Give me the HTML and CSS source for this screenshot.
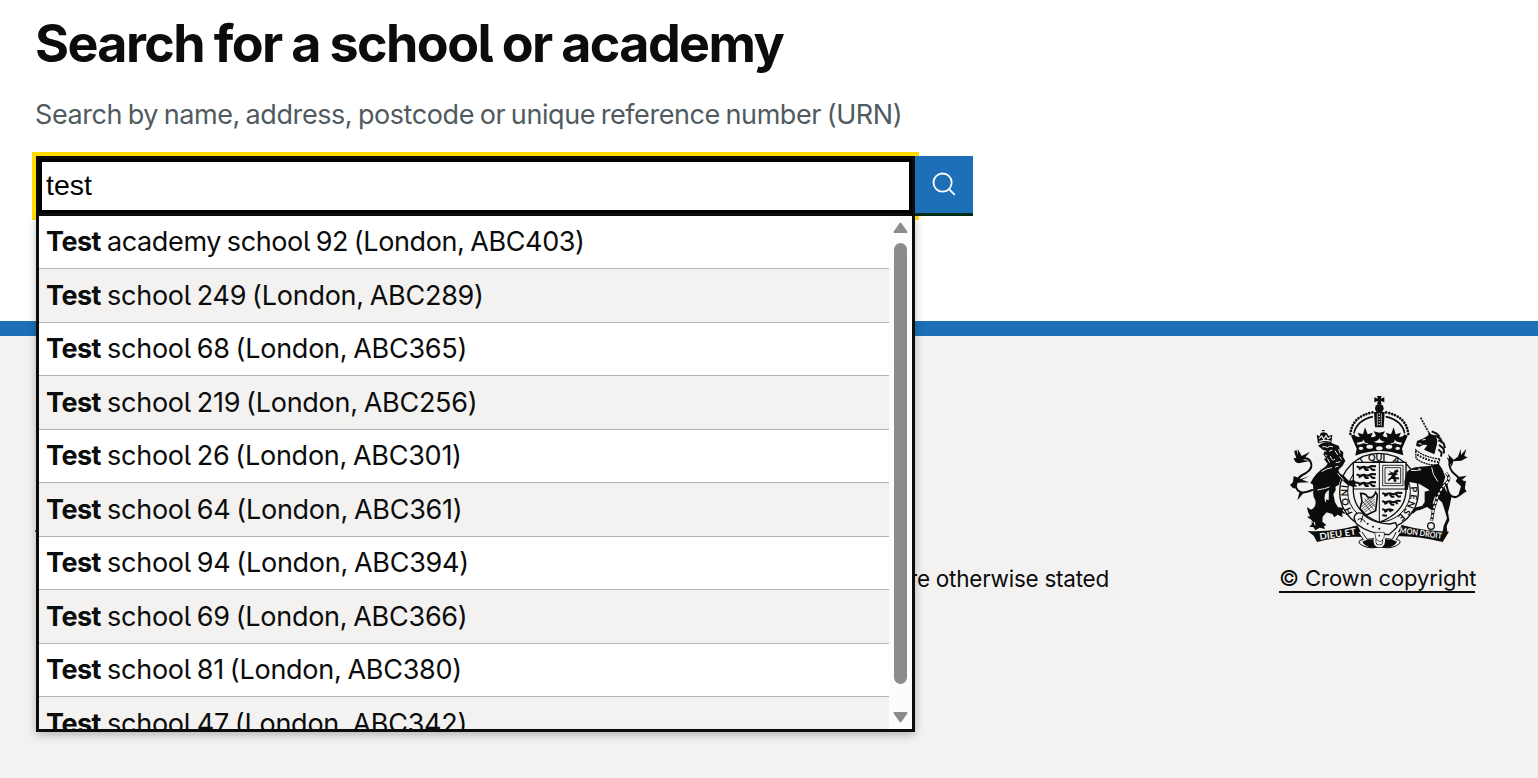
FILE: index.html
```html
<!DOCTYPE html>
<html lang="en">
<head>
<meta charset="utf-8">
<title>Search for a school or academy</title>
<link rel="stylesheet" href="styles.css">
</head>
<body>
<main class="main">
  <h1 class="title">Search for a school or academy</h1>
  <p class="hint">Search by name, address, postcode or unique reference number (URN)</p>
  <form class="search">
    <div class="combo">
      <div class="field">test</div>
      <div class="menu">
        <ul class="options">
          <li class="option option-long"><b>Test</b><span>academy school 92 (London, ABC403)</span></li>
          <li class="option"><b>Test</b><span>school 249 (London, ABC289)</span></li>
          <li class="option"><b>Test</b><span>school 68 (London, ABC365)</span></li>
          <li class="option"><b>Test</b><span>school 219 (London, ABC256)</span></li>
          <li class="option"><b>Test</b><span>school 26 (London, ABC301)</span></li>
          <li class="option"><b>Test</b><span>school 64 (London, ABC361)</span></li>
          <li class="option"><b>Test</b><span>school 94 (London, ABC394)</span></li>
          <li class="option"><b>Test</b><span>school 69 (London, ABC366)</span></li>
          <li class="option"><b>Test</b><span>school 81 (London, ABC380)</span></li>
          <li class="option"><b>Test</b><span>school 47 (London, ABC342)</span></li>
        </ul>
        <div class="scrollbar">
          <svg width="15" height="12" viewBox="0 0 15 12"><path d="M7.5 1.5 13.5 10H1.5Z" fill="#8b8b8b" stroke="#8b8b8b" stroke-width="2" stroke-linejoin="round"/></svg>
          <div class="thumb"></div>
          <svg width="15" height="12" viewBox="0 0 15 12"><path d="M7.5 10.5 13.5 2H1.5Z" fill="#8b8b8b" stroke="#8b8b8b" stroke-width="2" stroke-linejoin="round"/></svg>
        </div>
      </div>
    </div>
    <button class="submit" type="button" aria-label="Search">
      <svg width="26" height="26" viewBox="0 0 26 26" fill="none" stroke="#fff" stroke-width="1.8"><circle cx="11.6" cy="10.6" r="9.1"/><path d="M17.7 16.9 23.8 22.9" stroke-width="2"/></svg>
    </button>
  </form>
</main>
<footer class="footer">
  <div class="meta">
    <hr class="tick">
    <p class="licence">where otherwise stated</p>
  </div>
  <div class="copyright">
    <svg class="crest" width="192" height="164" viewBox="0 0 576 492" fill="#0b0c0c">
      <defs>
        <path id="passant" d="M0 6l7-5 7 5 9-2 12-1 8 4 3-7 6 2-4 8-8 4 5 6-8-1-5-4-10 1-5 5-8-1 5-5-7-3z"/>
      </defs>
      <!-- crown -->
      <path d="M276 18h14l-3 8 11-4v15l-11-4 3 9h-14l3-9-11 4V22l11 4z"/>
      <circle cx="283" cy="55" r="13"/>
      <path d="M267 66h32l-3 46h-26z"/>
      <path d="M277 70v38M289 70v38" stroke="#f3f2f1" stroke-width="2" fill="none"/>
      <path d="M283 70v38" stroke="#f3f2f1" stroke-width="4" stroke-dasharray="3 5" fill="none"/>
      <g fill="none" stroke="#0b0c0c">
        <path d="M196 132Q202 78 264 67M370 132Q364 78 302 67" stroke-width="8" stroke-linecap="round" stroke-dasharray="0.1 9"/>
        <path d="M207 130Q215 91 264 80M359 130Q351 91 302 80" stroke-width="5"/>
      </g>
      <path d="M198 137l10-4q4 9 16 8l-6-13 16 5 6-21 8 21 15-5-5 14q9 0 15-5l-7-13 17 4 17-4-7 13q6 5 15 5l-5-14 15 5 8-21 6 21 16-5-6 13q12 1 16-8l10 4-17 39 4 20q-73-26-144 1l4-21z"/>
      <g fill="#f3f2f1">
        <path d="M215 158q18 0 22-10 0 14 13 11l-3 4q-9-3-12-3-8 4-17 4zM351 158q-18 0-22-10 0 14-13 11l3 4q9-3 12-3 8 4 17 4zM266 155q14-1 17-11 3 10 17 11-17 8-34 0z"/>
        <ellipse cx="228" cy="175" rx="7" ry="5"/><ellipse cx="254" cy="170" rx="10" ry="6"/><ellipse cx="283" cy="175" rx="10" ry="6"/><ellipse cx="312" cy="170" rx="10" ry="6"/><ellipse cx="338" cy="175" rx="7" ry="5"/>
      </g>
      <!-- garter and shield -->
      <ellipse cx="282" cy="305" rx="118" ry="115" fill="#f3f2f1" stroke="#0b0c0c" stroke-width="4"/>
      <ellipse cx="282" cy="305" rx="94" ry="91" fill="#f3f2f1" stroke="#0b0c0c" stroke-width="3"/>
      <g class="motto" font-size="28">
        <text transform="translate(203 370) rotate(-113)">H</text>
        <text transform="translate(193 345) rotate(-100)">O</text>
        <text transform="translate(188 319) rotate(-90)">N</text>
        <text transform="translate(188 295) rotate(-83)">I</text>
        <text transform="translate(228 225) rotate(-32)">T</text>
        <text x="249" y="214">QUI</text>
        <text transform="translate(322 215) rotate(22)">A</text>
        <text transform="translate(376 290) rotate(86)">P</text>
        <text transform="translate(377 312) rotate(98)">E</text>
        <text transform="translate(373 331) rotate(111)">N</text>
        <text transform="translate(362 354) rotate(125)">S</text>
        <text transform="translate(349 369) rotate(137)">E</text>
      </g>
      <path d="M205 217H363V306Q358 369 283 397 209 369 205 306Z" fill="#f3f2f1" stroke="#0b0c0c" stroke-width="4"/>
      <path d="M205 297H363M283 217V395" stroke="#0b0c0c" stroke-width="3"/>
      <g fill="none" stroke="#0b0c0c" stroke-width="6" stroke-linejoin="round">
        <path id="pride" d="M215 229l9 4 12-3 12 3 12-5 13 1M221 238l10-5M237 233l6 7 8 0M255 232l8 8 8-1M215 253l9 4 12-3 12 3 12-5 13 1M221 262l10-5M237 257l6 7 8 0M255 256l8 8 8-1M215 277l9 4 12-3 12 3 12-5 13 1M221 286l10-5M237 281l6 7 8 0M255 280l8 8 8-1"/>
        <path d="M292 309l9 4 12-3 12 3 12-5 15 1M298 318l10-5M314 313l6 7 8 0M332 312l8 8 8-1M292 333l9 4 12-3 12 3 12-5 10 1M298 342l10-5M314 337l6 7 8 0M332 336l6 6M292 357l9 4 12-3 12 3M298 366l10-5M314 361l4 5M292 376l14 1"/>
      </g>
      <path d="M293 226h61v61h-61zM300 233h47v47h-47z" fill="none" stroke="#0b0c0c" stroke-width="2.5"/>
      <path d="M310 240l7 5 9 3 2-6 9-4 4 7-8 4 6 4-9 4 2 5 9 0 2 6-10 0 2 6-8 3-2-10-6 0-8 7-3-5 9-7 4-8-10 2-2-5 9-2z"/>
      <path d="M227 310q17 0 20 10 16 9 25-13l5 8-5 47-29 14-18-20 6-23z" fill="#f3f2f1" stroke="#0b0c0c" stroke-width="5"/>
      <path d="M230 350l38-29M232 356l38-29M236 361l34-26M240 366l29-23M230 342l22-17M231 332l28 34M239 326l29 35M247 323l23 28" stroke="#0b0c0c" stroke-width="1.8"/>
      <!-- lion -->
      <path d="M99 160l-4-26 9 5 3-10 8-2v-3h-4v-4h8v4h-4v3l10 2 6 9 11-4-3 26q-20-7-40 0z"/>
      <path d="M103 155q18-7 34-1M102 146l8-8 6 10 7-11 6 10 9-7" fill="none" stroke="#f3f2f1" stroke-width="3.5"/>
      <path d="M99 167l9-6q20-8 37 0l16 6 4 12 10 8-1 13 7 12-8 15-13 13 4 10q17 8 27 22l15-2 14 9-11 3 8 7-12 2-17-6-21-18-6 18-25 13q-17 8-17 22-2 15 9 21 10 13-2 24l-13 15-1 15 12 10-7 4 3 8-16-4-13 8-5-9-13-2 8-8-3-13-12-9 9-1-6-14-3-14 12 8q17-8 13-28-9-14-6-30l-1-17-8-5q15-31 45-49l7-9-11-14 6-3-8-11 4-9z"/>
      <path d="M112 171q8-4 15 2 8-8 17-2M115 181l9 3M132 184l10-4M121 194q3 8 6 2M136 198q5 18 14 9M127 205l7 13M150 182l8 13M161 177l4 13M152 218l14-3M164 200l6 9M160 228l-10 4M110 245q16-11 31-12M158 250q10 14 18 20M97 300q23-4 41-10M76 388l8 10M88 396l2 10" fill="none" stroke="#f3f2f1" stroke-width="3"/>
      <path d="M132 291l19-8 1 18-7 12 5 24 9 15 17 1-3 9 10 9-12-1 2 12-15-8-10 8-6-10-23-7 3-13-8-7 10-1-1-16 8 3z"/>
      <path d="M82 300Q40 319 32 288 31 263 63 249 87 234 76 214 69 201 51 206 35 204 33 184" fill="none" stroke="#0b0c0c" stroke-width="6" stroke-linecap="round"/>
      <path d="M34 204l-8-23 13 15-1-20 12 22 25-13-21 25 21 3-34 7q-12-2-15-16zM48 267L26 258l-2 18-9 9 9 10 9 0 5-17 35-1-22-8 24-12zM43 308l-6 23 18-21z"/>
      <!-- unicorn -->
      <path d="M407 83L430 125" fill="none" stroke="#0b0c0c" stroke-width="5" stroke-dasharray="6 3"/>
      <path d="M396 153l20-8 14-9 0-14 8 11 8 2q14 9 10 28l-8 30-31-14 10-14-12-1-12 7-10-4z"/>
      <path d="M412 150l10-2M401 161l9 1" stroke="#f3f2f1" stroke-width="3"/>
      <path d="M440 124l14 6 10 10M448 136l18 10 6 12M460 150l16 10 4 14M462 164l14 12 1 14M460 178l10 10-2 12" fill="none" stroke="#0b0c0c" stroke-width="6" stroke-linejoin="bevel"/>
      <path d="M392 180q29 23 73 27l-6 18q-41 1-66-20z" fill="#f3f2f1" stroke="#0b0c0c" stroke-width="4" stroke-dasharray="6 2"/>
      <path d="M397 194q29 18 62 22" fill="none" stroke="#0b0c0c" stroke-width="6" stroke-dasharray="5 4"/>
      <path d="M365 246q14-15 39-16 31-1 57-9l12 18 8 22-7 22 9 19 17 16-6 29-5 20 4 24-8 18 2 17-14-1 3-18 10-22-8-28-7-20-21-18-20-21-28-17-29-5-5 24-9-1-1-24z"/>
      <path d="M378 241q18 2 30-2M440 232q2 22 18 42M400 234l8 6" fill="none" stroke="#f3f2f1" stroke-width="3"/>
      <path d="M419 305l27-7 6 15-9 26 7 10-11 11-13-9-19 8-13 3-10 9-5-6 14-13 18-4 8-12z"/>
      <path d="M484 278q5 51 32 42 30-14 17-44-16-17-30-29-16-21-7-43" fill="none" stroke="#0b0c0c" stroke-width="6"/>
      <path d="M495 219l-11-17 9 5-4-15 17 17 13-9 8-23 1 18 16-19-6 22 10 4-19 10-24 2-5 16zM519 261l26-4-15 14 13 3-4 22 6 8-14 9-10-1 7-23-16-15z"/>
      <path d="M483 249q18 16 0 31-21 21-30 55l-8 23-5 34" fill="none" stroke="#0b0c0c" stroke-width="9"/>
      <path d="M483 249q18 16 0 31-21 21-30 55l-8 23-5 34" fill="none" stroke="#f3f2f1" stroke-width="5" stroke-dasharray="9 5"/>
      <circle cx="438" cy="408" r="10" fill="none" stroke="#0b0c0c" stroke-width="4"/>
      <!-- buckle and scrolls -->
      <path d="M68 423Q145 427 218 406L234 441Q163 438 96 456L86 437Z"/>
      <path d="M350 405Q420 424 492 425L473 456Q404 438 332 438Z"/>
      <path d="M220 427l15 22q-16 0-12 11 20 18 54 12l-11-26-20 2-15-22M347 427l-14 22q16 0 11 11-19 18-52 12l11-26 19 2 12-22" fill="#f3f2f1" stroke="#0b0c0c" stroke-width="3"/>
      <path d="M232 455q15-7 38-7l4 25q-34 1-42-18zM336 455q-15-7-39-7l-5 25q36 1 44-18z"/>
      <path d="M207 385q2-21 26-15 23 28 82 32l17-4 4 14-24 22q-58-1-98-33z" fill="#f3f2f1" stroke="#0b0c0c" stroke-width="4"/>
      <path d="M218 389q14-9 23 8M235 373l-8 24" fill="none" stroke="#0b0c0c" stroke-width="3"/>
      <circle cx="248" cy="401" r="3"/><circle cx="264" cy="410" r="3"/><circle cx="283" cy="416" r="3"/>
      <path d="M269 427h29v10l-3 13-10 5-12-7z" fill="#f3f2f1" stroke="#0b0c0c" stroke-width="2"/>
      <circle cx="283" cy="437" r="2.5"/>
      <path d="M269 446q-3 23 14 23t14-23" fill="none" stroke="#0b0c0c" stroke-width="10"/>
      <path d="M269 446q-3 23 14 23t14-23" fill="none" stroke="#f3f2f1" stroke-width="6"/>
      <g class="motto banner" font-size="27">
        <text transform="translate(105 449) rotate(-8)" textLength="110" lengthAdjust="spacingAndGlyphs">DIEU ET</text>
        <text transform="translate(343 429) rotate(8)" font-size="25" textLength="128" lengthAdjust="spacingAndGlyphs">MON DROIT</text>
      </g>
    </svg>
    <a class="crown-link">© Crown copyright</a>
  </div>
</footer>
</body>
</html>
```
FILE: styles.css
```css
* { box-sizing: border-box; }
body {
  margin: 0;
  height: 778px;
  overflow: hidden;
  display: flex;
  flex-direction: column;
  background: #fff;
  color: #0b0c0c;
  font-family: Inter, "Liberation Sans", sans-serif;
  font-feature-settings: "cv05" 1;
}
.main {
  height: 321px;
  padding: 16px 36px 0;
  flex: none;
}
.title {
  margin: 0 0 0 -1px;
  font-size: 52px;
  line-height: 56px;
  font-weight: 700;
  letter-spacing: -1.6px;
  word-spacing: -1px;
  white-space: nowrap;
}
.hint {
  margin: 24px 0 0 -1px;
  font-size: 27px;
  line-height: 37px;
  color: #505a5f;
  letter-spacing: -0.42px;
  word-spacing: -1.5px;
  white-space: nowrap;
}
.search {
  display: flex;
  margin-top: 23px;
}
.combo {
  position: relative;
  width: 879px;
  height: 60px;
}
.field {
  height: 60px;
  border: 3px solid #0b0c0c;
  box-shadow: inset 0 0 0 3px #000;
  outline: 4px solid #fd0;
  padding: 0 7px;
  font: 28.5px/53px "Liberation Sans", Arial, sans-serif;
  color: #000;
}
.submit {
  position: relative;
  width: 58px;
  height: 60px;
  padding: 0;
  display: flex;
  align-items: center;
  justify-content: center;
  border: 0;
  border-bottom: 3px solid #002d18;
  background: #1d70b8;
}
.menu {
  position: absolute;
  z-index: 2;
  top: 60px;
  left: 0;
  width: 879px;
  height: 516px;
  display: flex;
  border: 3px solid #0b0c0c;
  border-top: 0;
  background: #fff;
  box-shadow: rgba(0, 0, 0, 0.257) 0 3px 9px;
  overflow: hidden;
}
.options {
  flex: 1;
  margin: 0;
  padding: 0;
  list-style: none;
}
.option {
  display: flex;
  gap: 7px;
  height: 53px;
  padding-left: 7px;
  border-bottom: 1px solid #b1b4b6;
  font-size: 27px;
  line-height: 51px;
  letter-spacing: -0.25px;
  word-spacing: -1.5px;
  white-space: nowrap;
}
.option b { width: 54px; letter-spacing: -0.5px; }
.option-long { letter-spacing: -0.38px; }
.option:nth-child(even) {
  height: 54px;
  background: #f3f2f1;
  line-height: 53px;
}
.scrollbar {
  width: 23px;
  display: flex;
  flex-direction: column;
  align-items: center;
  padding: 6px 0 5px;
  background: #fcfcfc;
}
.thumb {
  width: 13px;
  height: 441px;
  margin: 9px 0 27px;
  border-radius: 7px;
  background: #8b8b8b;
}
.footer {
  flex: 1;
  display: flex;
  justify-content: space-between;
  padding: 54px 61px 0 35px;
  border-top: 15px solid #1d70b8;
  background: #f3f2f1;
}
.meta { width: 1074px; padding-top: 140px; }
.tick {
  width: 4px;
  height: 2px;
  margin: 0;
  border: 0;
  background: #505a5f;
}
.licence {
  margin: 31px 0 0;
  text-align: right;
  font-size: 22.5px;
  line-height: 32px;
  letter-spacing: -0.25px;
}
.copyright {
  width: 198px;
  display: flex;
  flex-direction: column;
  align-items: flex-start;
}
.crest {
  display: block;
  flex: none;
  margin-left: 6px;
}
.crown-link {
  width: 196px;
  margin-top: 11px;
  font-size: 22px;
  line-height: 26px;
  letter-spacing: -0.1px;
  border-bottom: 2px solid #0b0c0c;
  white-space: nowrap;
}
.motto { font-family: Lato, sans-serif; font-weight: 700; }
.banner { fill: #f3f2f1; }
```
